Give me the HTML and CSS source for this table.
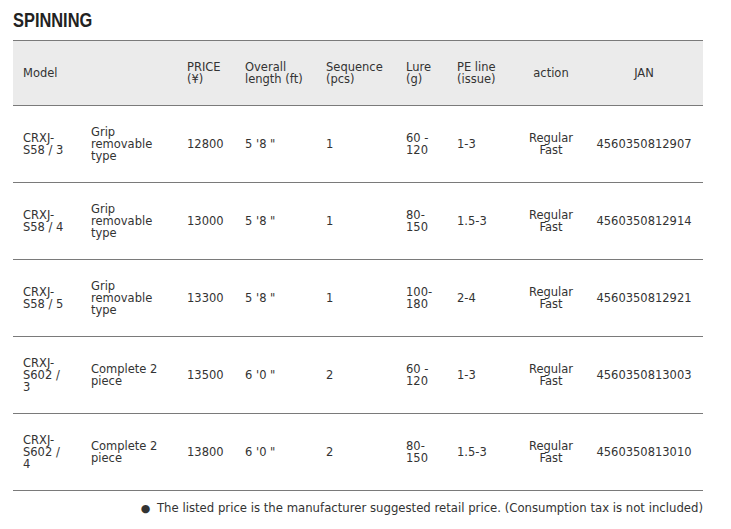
FILE: index.html
```html
<!DOCTYPE html>
<html lang="en">
<head>
<meta charset="utf-8">
<title>SPINNING</title>
<link rel="stylesheet" href="styles.css">
</head>
<body>
<div class="page">
  <h2 class="title"><span class="title-text">SPINNING</span></h2>
  <table class="spec">
    <colgroup>
      <col class="c-model">
      <col class="c-type">
      <col class="c-price">
      <col class="c-len">
      <col class="c-seq">
      <col class="c-lure">
      <col class="c-pe">
      <col class="c-action">
      <col class="c-jan">
    </colgroup>
    <thead>
      <tr>
        <th class="model">Model</th>
        <th></th>
        <th>PRICE (¥)</th>
        <th>Overall length (ft)</th>
        <th>Sequence (pcs)</th>
        <th>Lure (g)</th>
        <th>PE line (issue)</th>
        <th class="center">action</th>
        <th class="jan center">JAN</th>
      </tr>
    </thead>
    <tbody>
      <tr>
        <td class="model">CRXJ-S58 / 3</td><td>Grip removable type</td><td>12800</td><td>5 '8 "</td><td>1</td><td>60 - 120</td><td>1-3</td><td class="center">Regular Fast</td><td class="jan center">4560350812907</td>
      </tr>
      <tr>
        <td class="model">CRXJ-S58 / 4</td><td>Grip removable type</td><td>13000</td><td>5 '8 "</td><td>1</td><td>80-150</td><td>1.5-3</td><td class="center">Regular Fast</td><td class="jan center">4560350812914</td>
      </tr>
      <tr>
        <td class="model">CRXJ-S58 / 5</td><td>Grip removable type</td><td>13300</td><td>5 '8 "</td><td>1</td><td>100-180</td><td>2-4</td><td class="center">Regular Fast</td><td class="jan center">4560350812921</td>
      </tr>
      <tr>
        <td class="model">CRXJ-S602 / 3</td><td>Complete 2 piece</td><td>13500</td><td>6 '0 "</td><td>2</td><td>60 - 120</td><td>1-3</td><td class="center">Regular Fast</td><td class="jan center">4560350813003</td>
      </tr>
      <tr>
        <td class="model">CRXJ-S602 / 4</td><td>Complete 2 piece</td><td>13800</td><td>6 '0 "</td><td>2</td><td>80-150</td><td>1.5-3</td><td class="center">Regular Fast</td><td class="jan center">4560350813010</td>
      </tr>
    </tbody>
  </table>
  <p class="note"><span class="dot">●</span> The listed price is the manufacturer suggested retail price. (Consumption tax is not included)</p>
</div>
</body>
</html>
```

FILE: styles.css
```css
html, body {
  margin: 0;
  padding: 0;
  background: #ffffff;
}

.page {
  padding: 0 28px 0 13px;
  color: #333333;
  font-family: "DejaVu Sans", Verdana, sans-serif;
}

.title {
  margin: 0;
  padding-top: 8px;
  height: 40px;
  box-sizing: border-box;
  font-family: "Liberation Sans", Arial, sans-serif;
  font-weight: bold;
  font-size: 20px;
  line-height: 24px;
  color: #222222;
}

.title-text {
  display: inline-block;
  transform: scaleX(0.82);
  transform-origin: left center;
}

.spec {
  width: 690px;
  border-collapse: collapse;
  table-layout: fixed;
  font-size: 11.5px;
  line-height: 12px;
}

.c-model { width: 68px; }
.c-type { width: 96px; }
.c-price { width: 58px; }
.c-len { width: 81px; }
.c-seq { width: 80px; }
.c-lure { width: 51px; }
.c-pe { width: 61px; }
.c-action { width: 86px; }
.c-jan { width: 109px; }

.spec th {
  background: #ebebeb;
  font-weight: normal;
  text-align: left;
  height: 64px;
  padding: 0 2px 0 10px;
  vertical-align: middle;
  border-top: 1px solid #7a7a7a;
  border-bottom: 1px solid #7a7a7a;
}

.spec td {
  height: 76px;
  padding: 0 2px 0 10px;
  vertical-align: middle;
  border-bottom: 1px solid #7a7a7a;
}

.spec .model {
  padding-right: 12px;
}

.spec .center {
  text-align: center;
  padding: 0 10px;
}

.spec .jan {
  padding: 0 9px 0 0;
}

.note {
  margin: 10px 0 0;
  text-align: right;
  font-size: 11.7px;
  line-height: 14px;
}

.dot {
  font-size: 11px;
  margin-right: 3px;
}
```
